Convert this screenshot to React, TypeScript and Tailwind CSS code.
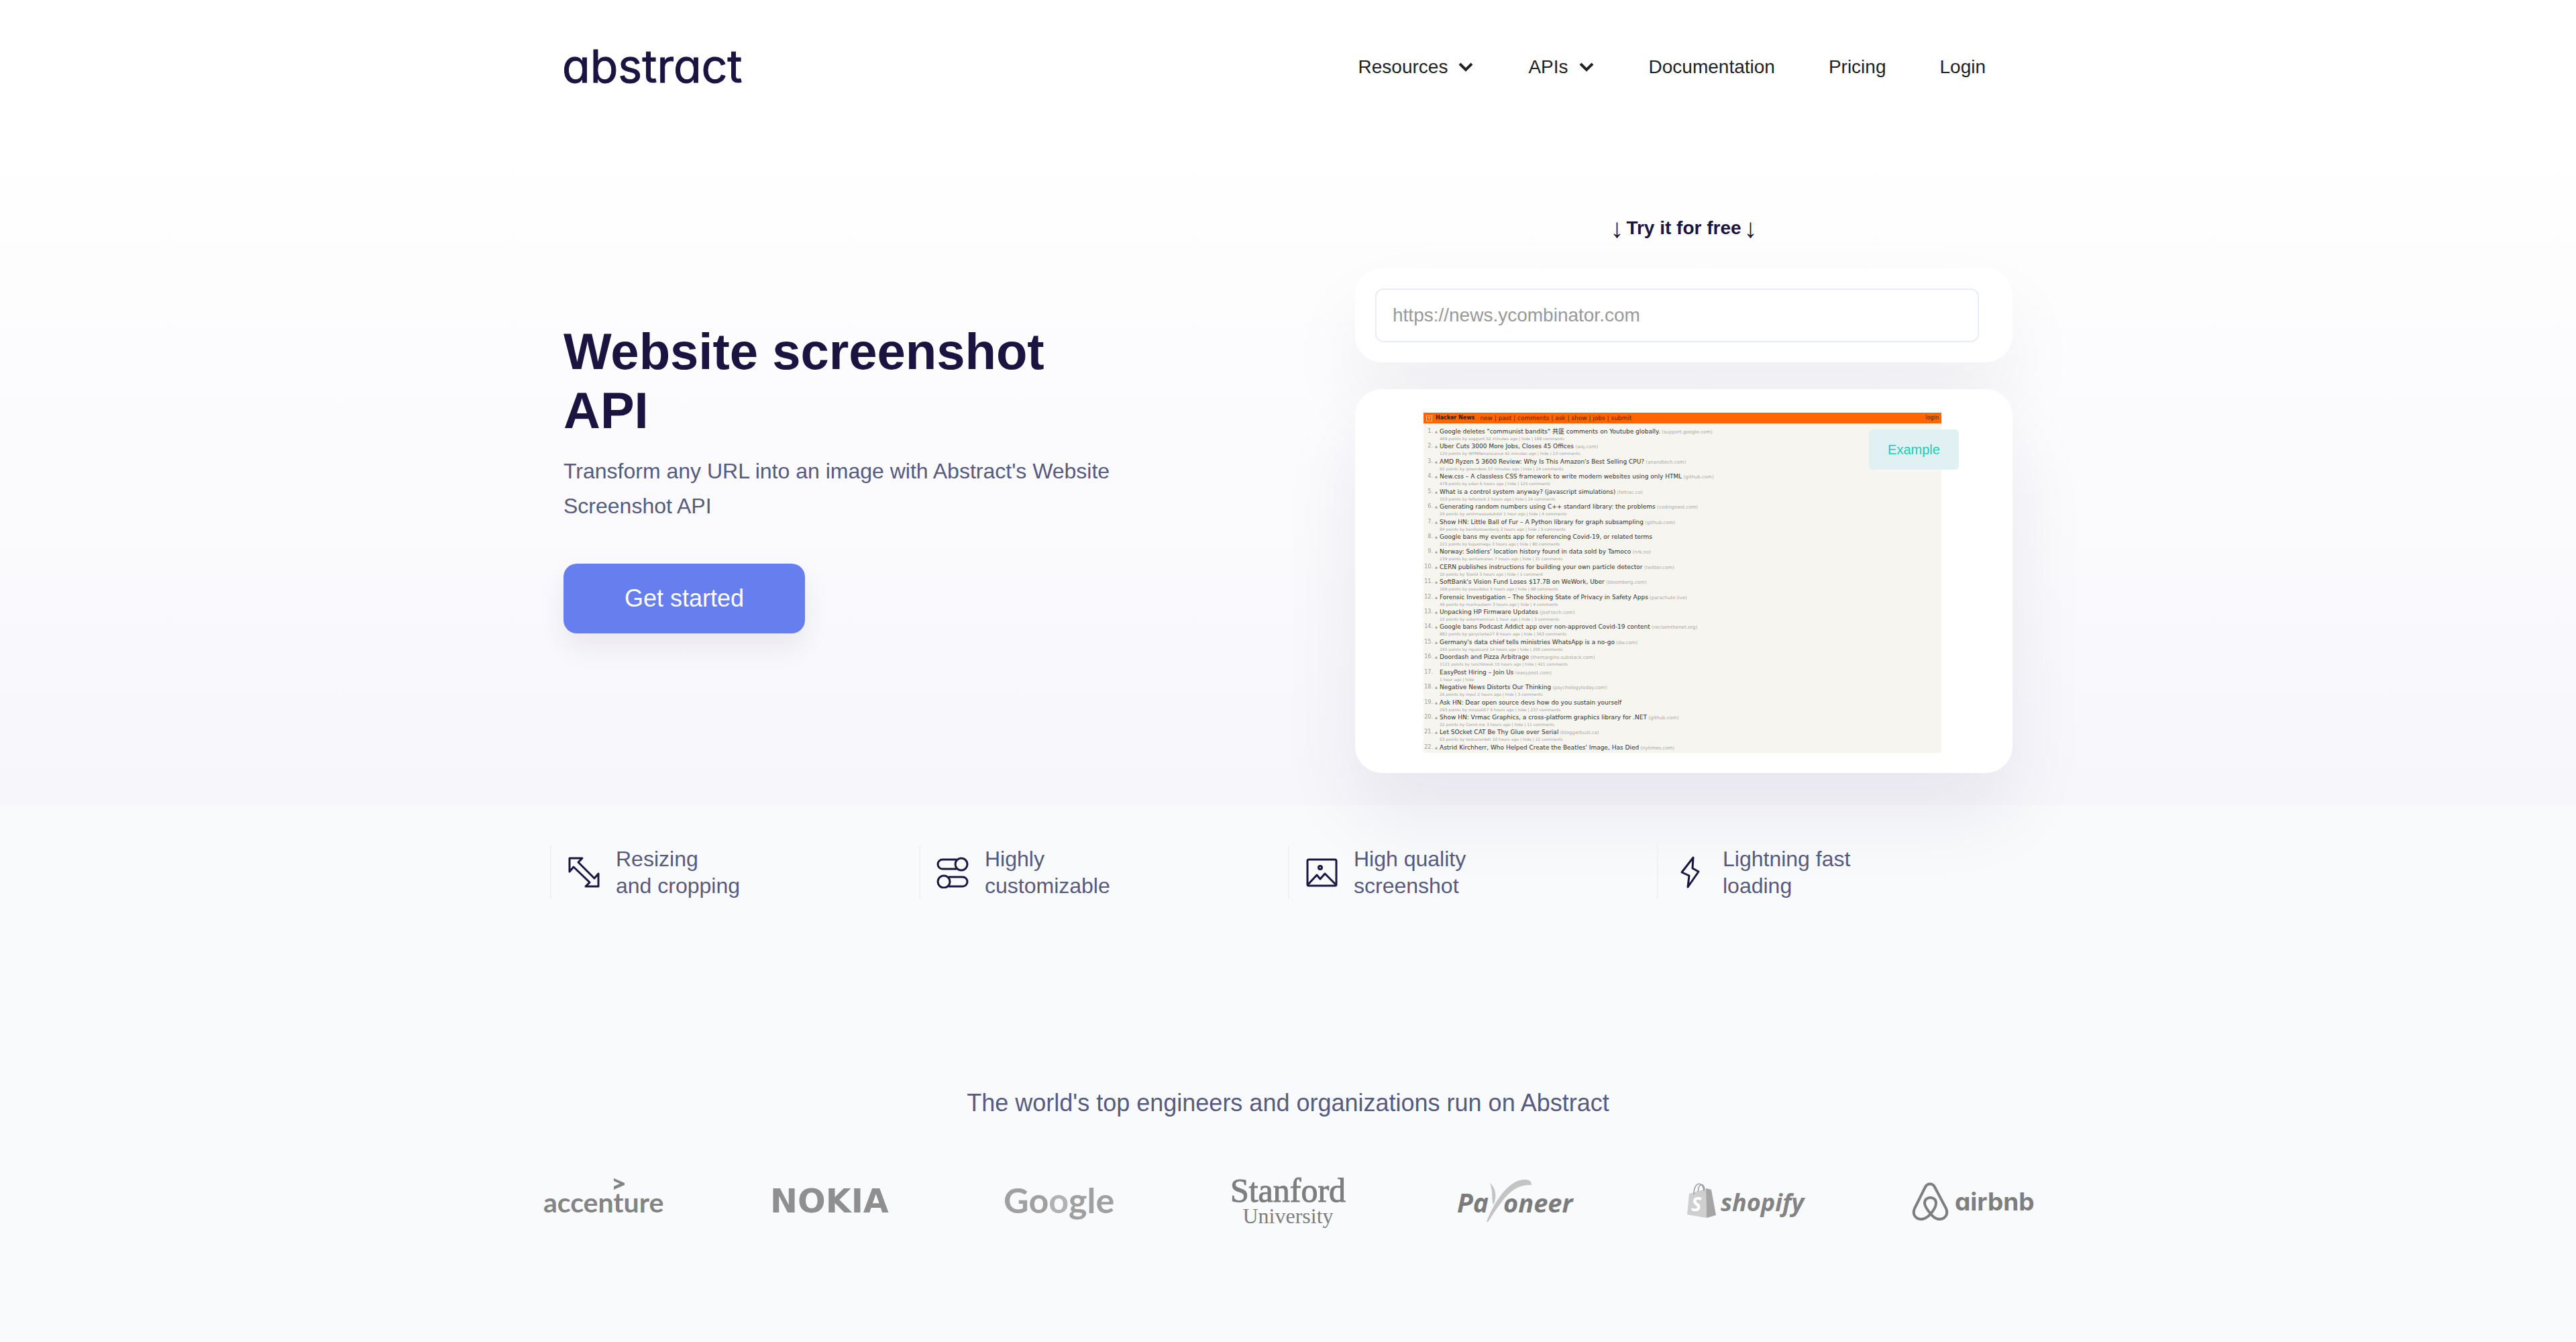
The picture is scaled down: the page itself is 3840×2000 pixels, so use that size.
import React from "react";

type Story = { title: string; site?: string; meta?: string; promoted?: boolean };

const STORIES: Story[] = [
  { title: 'Google deletes "communist bandits" 共匪 comments on Youtube globally.', site: "support.google.com", meta: "469 points by zaggunt 52 minutes ago | hide | 188 comments" },
  { title: "Uber Cuts 3000 More Jobs, Closes 45 Offices", site: "wsj.com", meta: "120 points by WPMRenaissance 42 minutes ago | hide | 23 comments" },
  { title: "AMD Ryzen 5 3600 Review: Why Is This Amazon's Best Selling CPU?", site: "anandtech.com", meta: "60 points by greendore 57 minutes ago | hide | 24 comments" },
  { title: "New.css – A classless CSS framework to write modern websites using only HTML", site: "github.com", meta: "478 points by edan 6 hours ago | hide | 125 comments" },
  { title: "What is a control system anyway? (javascript simulations)", site: "feltrac.co", meta: "103 points by feltarock 2 hours ago | hide | 24 comments" },
  { title: "Generating random numbers using C++ standard library: the problems", site: "codingnest.com", meta: "29 points by amirmasoudabdol 1 hour ago | hide | 4 comments" },
  { title: "Show HN: Little Ball of Fur – A Python library for graph subsampling", site: "github.com", meta: "84 points by benitorosenberg 3 hours ago | hide | 5 comments" },
  { title: "Google bans my events app for referencing Covid-19, or related terms", meta: "221 points by kujaomega 3 hours ago | hide | 80 comments" },
  { title: "Norway: Soldiers' location history found in data sold by Tamoco", site: "nrk.no", meta: "239 points by sentamaries 7 hours ago | hide | 31 comments" },
  { title: "CERN publishes instructions for building your own particle detector", site: "twitter.com", meta: "10 points by Tsiolid 3 hours ago | hide | 1 comment" },
  { title: "SoftBank's Vision Fund Loses $17.7B on WeWork, Uber", site: "bloomberg.com", meta: "169 points by pseudolus 5 hours ago | hide | 98 comments" },
  { title: "Forensic Investigation – The Shocking State of Privacy in Safety Apps", site: "parachute.live", meta: "49 points by marinasbern 3 hours ago | hide | 4 comments" },
  { title: "Unpacking HP Firmware Updates", site: "jsof-tech.com", meta: "10 points by askermenman 1 hour ago | hide | 3 comments" },
  { title: "Google bans Podcast Addict app over non-approved Covid-19 content", site: "reclaimthenet.org", meta: "882 points by garyclarke27 8 hours ago | hide | 363 comments" },
  { title: "Germany's data chief tells ministries WhatsApp is a no-go", site: "dw.com", meta: "295 points by riguiscard 14 hours ago | hide | 200 comments" },
  { title: "Doordash and Pizza Arbitrage", site: "themargins.substack.com", meta: "1121 points by lunchbreak 15 hours ago | hide | 421 comments" },
  { title: "EasyPost Hiring – Join Us", site: "easypost.com", meta: "1 hour ago | hide", promoted: true },
  { title: "Negative News Distorts Our Thinking", site: "psychologytoday.com", meta: "26 points by mpul 2 hours ago | hide | 3 comments" },
  { title: "Ask HN: Dear open source devs how do you sustain yourself", meta: "293 points by mraza007 9 hours ago | hide | 237 comments" },
  { title: "Show HN: Vrmac Graphics, a cross-platform graphics library for .NET", site: "github.com", meta: "22 points by Const-me 3 hours ago | hide | 11 comments" },
  { title: "Let SOcket CAT Be Thy Glue over Serial", site: "bloggerbust.ca", meta: "63 points by todsacerdoti 10 hours ago | hide | 22 comments" },
  { title: "Astrid Kirchherr, Who Helped Create the Beatles' Image, Has Died", site: "nytimes.com" },
];

function Wordmark() {
  return (
    <svg className="h-20 w-[300px] overflow-visible" viewBox="0 0 300 80" role="img" aria-label="abstract">
      <text
        x="-2"
        y="63"
        fontSize="68"
        fontWeight="400"
        fill="#1b1441"
        stroke="#1b1441"
        strokeWidth="1"
        strokeLinejoin="round"
        className="font-['Inter',sans-serif] [font-feature-settings:'cv11']"
      >
        abstract
      </text>
    </svg>
  );
}

function Chevron() {
  return (
    <svg className="h-[14px] w-[22px]" viewBox="0 0 22 14" fill="none" stroke="#222" strokeWidth="4" aria-hidden="true">
      <path d="M2 2l9 9 9-9" />
    </svg>
  );
}

function Header() {
  return (
    <header className="bg-white">
      <div className="mx-auto flex h-[200px] w-full max-w-[2160px] items-center justify-between pr-10">
        <a href="#home">
          <Wordmark />
        </a>
        <nav className="flex items-center gap-20 text-[28px] leading-8 text-[#222]">
          <button type="button" className="flex items-center gap-4 pr-0.5">
            Resources <Chevron />
          </button>
          <button type="button" className="flex items-center gap-4 pr-0.5">
            APIs <Chevron />
          </button>
          <a href="#documentation">Documentation</a>
          <a href="#pricing">Pricing</a>
          <a href="#login">Login</a>
        </nav>
      </div>
    </header>
  );
}

function NewsPreview() {
  return (
    <div className="ml-[102px] flex h-[507px] w-[772px] flex-col overflow-hidden bg-[#f6f5ef] font-['DejaVu_Sans','Noto_Sans_CJK_SC',sans-serif] text-[9px]">
      <div className="flex h-4 shrink-0 items-center bg-[#ff6600] pl-1 pr-1 leading-4 text-[#4a2408]">
        <span className="flex size-[9px] items-center justify-center border border-[#ffb98a] text-[6px] leading-none text-white">Y</span>
        <b className="ml-[5px] text-[8px] text-[#3a1600]">Hacker News</b>
        <span className="ml-2">new | past | comments | ask | show | jobs | submit</span>
        <span className="ml-auto text-[8px]">login</span>
      </div>
      <ol className="flex flex-1 flex-col justify-between pb-[2px] pt-[6px]">
        {STORIES.map((story, index) => (
          <li key={story.title} className="flex">
            <span className="w-[14px] shrink-0 text-right text-[8px] leading-3 text-[#9a9a96]">{index + 1}.</span>
            <span className="w-[10px] shrink-0 pl-[3px] text-[5px] leading-3 text-[#9a9a96]">{story.promoted ? "" : "▲"}</span>
            <div>
              <p className="h-3 whitespace-nowrap leading-3 text-[#30302e]">
                {story.title}
                {story.site && <span className="text-[7px] text-[#a9a9a5]"> ({story.site})</span>}
              </p>
              {story.meta && <p className="h-[10px] whitespace-nowrap text-[6px] leading-[10px] text-[#a3a39f]">{story.meta}</p>}
            </div>
          </li>
        ))}
      </ol>
    </div>
  );
}

function Hero() {
  return (
    <section className="bg-linear-to-b from-white to-[#f7f6fb]">
      <div className="mx-auto flex w-full max-w-[2160px] justify-between pb-12">
        <div className="max-w-[860px] pt-[280px]">
          <h1 className="text-[76px] font-bold leading-[88px] text-[#1b1441]">Website screenshot API</h1>
          <p className="mt-5 text-[32px] leading-[52px] text-[#565a7e]">
            Transform any URL into an image with Abstract's Website Screenshot API
          </p>
          <button
            type="button"
            className="mt-[60px] h-[104px] w-[360px] rounded-[20px] bg-[#677eee] text-[36px] text-white shadow-[0_20px_40px_rgba(22,14,60,0.07)]"
          >
            Get started
          </button>
        </div>
        <div className="w-[980px] pt-[124px]">
          <p className="flex items-center justify-center gap-1 text-[28px] font-bold leading-8 text-[#1b1441]">
            <span className="text-[40px] font-normal">↓</span>
            Try it for free
            <span className="text-[40px] font-normal">↓</span>
          </p>
          <form className="mt-11 rounded-[40px] bg-white py-[30px] pl-[30px] pr-[50px] shadow-[0_60px_120px_rgba(22,14,50,0.06)]">
            <input
              aria-label="Website URL"
              type="url"
              placeholder="https://news.ycombinator.com"
              className="block h-20 w-full rounded-xl border-2 border-[#ebebff] bg-white px-6 text-[28px] placeholder:text-[#999]"
            />
          </form>
          <div className="relative mt-10 rounded-[40px] bg-white pb-[30px] pt-[35px] shadow-[0_60px_120px_rgba(22,14,50,0.07)]">
            <NewsPreview />
            <span className="absolute right-20 top-15 flex h-15 w-[134px] items-center justify-center rounded-md bg-[#e0f0f3] text-[20px] text-[#22cbb5]">
              Example
            </span>
          </div>
        </div>
      </div>
    </section>
  );
}

const iconProps = {
  className: "size-12 shrink-0",
  viewBox: "0 0 48 48",
  fill: "none",
  stroke: "#1b1441",
  strokeWidth: 3,
  strokeLinejoin: "round" as const,
  "aria-hidden": true,
};

const FEATURES = [
  {
    lines: ["Resizing", "and cropping"],
    icon: (
      <svg {...iconProps}>
        <path d="M3 3h19l-6 6 24 24 6-7v19H27l6-6L9 16l-6 7z" />
      </svg>
    ),
  },
  {
    lines: ["Highly", "customizable"],
    icon: (
      <svg {...iconProps}>
        <path d="M30 5H9a6 6 0 0 0 0 14h21M18 31h21a6 6 0 0 1 0 14H18" />
        <circle cx="37" cy="12" r="9" />
        <circle cx="11" cy="38" r="9" />
      </svg>
    ),
  },
  {
    lines: ["High quality", "screenshot"],
    icon: (
      <svg {...iconProps}>
        <rect x="3" y="5" width="43" height="39" rx="2" />
        <circle cx="22" cy="17" r="2.5" />
        <path d="M4 42l13-14 5 6 7-8 16 16" />
      </svg>
    ),
  },
  {
    lines: ["Lightning fast", "loading"],
    icon: (
      <svg {...iconProps}>
        <path d="M28 2L11 24l11 5-2 17 16-23-9-5z" />
      </svg>
    ),
  },
];

function Features() {
  return (
    <ul className="relative mx-auto grid w-full max-w-[2200px] grid-cols-4 pt-15">
      {FEATURES.map(({ lines, icon }) => (
        <li key={lines[0]} className="flex items-center gap-6 border-l-2 border-[#f0f1f3] pl-6">
          {icon}
          <p className="text-[32px] leading-10 text-[#565a7e]">
            {lines[0]}
            <br />
            {lines[1]}
          </p>
        </li>
      ))}
    </ul>
  );
}

function Logo({ label, children }: { label: string; children: React.ReactNode }) {
  return (
    <svg className="h-20 w-[180px] overflow-visible" viewBox="0 0 180 80" role="img" aria-label={label}>
      {children}
    </svg>
  );
}

function Customers() {
  return (
    <section className="mt-[280px] pb-[172px]">
      <h2 className="text-center text-[36px] leading-[48px] text-[#575b82]">
        The world's top engineers and organizations run on Abstract
      </h2>
      <div className="mx-auto mt-20 flex w-full max-w-[2220px] items-center justify-between">
        <Logo label="accenture">
          <text x="0" y="59" fontSize="41" fontWeight="700" fill="#848484" className="font-['Lato',sans-serif]">accenture</text>
          <path d="M105 8l16 7v3l-16 7v-5l9-4-9-4z" fill="#848484" />
        </Logo>
        <Logo label="Nokia">
          <text x="-2" y="59" fontSize="49" fontWeight="700" fill="#8f8f8f" className="font-['DejaVu_Sans',sans-serif]">NOKIA</text>
        </Logo>
        <Logo label="Google">
          <text x="6" y="60" fontSize="52" fontWeight="700" fill="#a0a0a0" className="font-['Lato',sans-serif]">
            Go<tspan fill="#b2b2b2">o</tspan>gle
          </text>
        </Logo>
        <Logo label="Stanford University">
          <text x="90" y="43" textAnchor="middle" fontSize="50" fill="#7e7e7e" stroke="#7e7e7e" className="font-['Liberation_Serif',serif]">Stanford</text>
          <text x="90" y="75" textAnchor="middle" fontSize="32" fill="#7e7e7e" className="font-['Liberation_Serif',serif]">University</text>
        </Logo>
        <Logo label="Payoneer">
          <path d="M51 15c7 6 12 18 5 33-3-8 0-20-5-33z" fill="#c4c4c4" />
          <path d="M46 73C58 40 82 8 104 10c5 0 9 2 9 8-30-2-44 24-65 55z" fill="#c4c4c4" />
          <text x="2" y="59" fontSize="39" fontWeight="700" fontStyle="italic" fill="#7b7b7b" className="font-['Open_Sans',sans-serif]">Pa</text>
          <text x="71" y="59" fontSize="38" fontWeight="700" fontStyle="italic" fill="#7b7b7b" className="font-['Open_Sans',sans-serif]">oneer</text>
        </Logo>
        <Logo label="Shopify">
          <path d="M8 31l25-7 1 43-29-5z" fill="#cfcfcf" />
          <path d="M33 23l8 2 7 38-14 4z" fill="#a5a5a5" />
          <path d="M15 32c0-20 14-20 15-5M21 28c2-15 9-12 10-3" fill="none" stroke="#9c9c9c" strokeWidth="1.5" />
          <text x="11" y="57" fontSize="29" fontWeight="700" fontStyle="italic" fill="#fff" className="font-['Open_Sans',sans-serif]">S</text>
          <text x="55" y="57" fontSize="36" fontWeight="700" fontStyle="italic" fill="#838383" className="font-['Open_Sans',sans-serif]">shopify</text>
        </Logo>
        <Logo label="Airbnb">
          <path
            d="M28 61C21 69 13 71 7 67 2 63 2 58 4 53L20 21C23 15 31 15 34 21L51 53C53 58 53 63 48 67 42 71 34 69 28 61 22 54 19 49 19 45 19 34 36 34 36 45 36 49 34 54 28 61Z"
            fill="none"
            stroke="#7e7e7e"
            strokeWidth="4"
          />
          <text x="64" y="56" fontSize="37" fontWeight="700" fill="#7e7e7e" className="font-['Inter',sans-serif] [font-feature-settings:'cv11']">airbnb</text>
        </Logo>
      </div>
    </section>
  );
}

export default function App() {
  return (
    <div className="min-h-screen bg-[#f9fafc] font-['Liberation_Sans',Arial,sans-serif]">
      <Header />
      <main>
        <Hero />
        <Features />
        <Customers />
      </main>
    </div>
  );
}
